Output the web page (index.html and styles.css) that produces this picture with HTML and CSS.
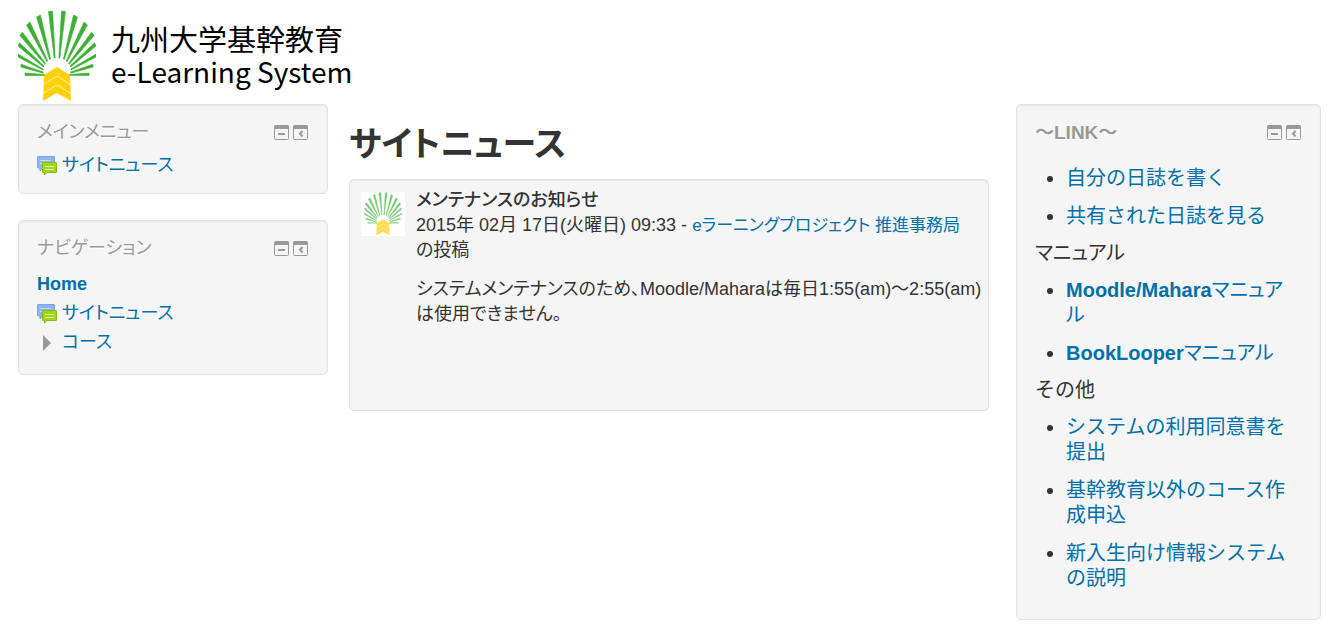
FILE: index.html
```
<!DOCTYPE html>
<html lang="ja">
<head>
<meta charset="utf-8">
<title>九州大学基幹教育 e-Learning System</title>
<link rel="stylesheet" href="styles.css">
</head>
<body>
<svg class="defs" aria-hidden="true">
  <defs>
    <g id="rays">
      <path d="M30.5 1.5 34.5 1 37.2 48H36.2Z"/>
      <path d="M18.5 7 22.5 5 32.6 49 31.6 49.5Z"/>
      <path d="M8.5 15 12 12 29.8 51 29 51.8Z"/>
      <path d="M1.8 25.5 4.5 22.2 27.5 53.5 26.7 54.3Z"/>
      <path d="M0 36 1.5 32.8 26 56 25.2 57Z"/>
      <path d="M0 47V44L25.2 59 24.8 60Z"/>
      <path d="M2.8 57 3.2 54.2 25.2 62V63.2Z"/>
      <path d="M7 65.6V63L27 64.6V65.6Z"/>
    </g>
    <symbol id="emblem" viewBox="0 0 78 92">
      <g fill="#3db034" stroke="#3db034" stroke-width=".6"><use href="#rays"/><use href="#rays" transform="matrix(-1 0 0 1 78 0)"/></g>
      <path fill="#ffd005" d="M39 57 52 65 53 91 39 83 25 91 26 65Z"/>
      <path fill="none" stroke="#fff3b8" d="M25.5 74.5 39 66 52.5 74.5M25 83.5 39 75 53 83.5"/>
    </symbol>
    <symbol id="forum" viewBox="0 0 20 20">
      <path fill="#8fb5f0" stroke="#7ba5e6" d="M1 .5H17a.5.5 0 0 1 .5.5V12H6L3 15V12H1a.5.5 0 0 1-.5-.5V1A.5.5 0 0 1 1 .5Z"/>
      <path fill="none" stroke="#c5dafa" d="M3 4.5H14M3 7.5H6"/>
      <path fill="#a2d51f" stroke="#82bd0a" d="M6 6.5H19a.5.5 0 0 1 .5.5V16a.5.5 0 0 1-.5.5H10L7.5 19V16.5H6a.5.5 0 0 1-.5-.5V7a.5.5 0 0 1 .5-.5Z"/>
      <path fill="none" stroke="#e0f5a0" d="M8 10.5H17M8 13.5H17"/>
    </symbol>
    <symbol id="hide" viewBox="0 0 15 15">
      <path fill="none" stroke="#999" d="M.5 2V13.5a1 1 0 0 0 1 1H13.500a1 1 0 0 0 1-1V2"/>
      <path fill="#999" d="M0 4V1.500A1.500 1.500 0 0 1 1.500 0H13.500A1.500 1.500 0 0 1 15 1.500V4ZM4 8H11V10H4Z"/>
    </symbol>
    <symbol id="dock" viewBox="0 0 15 15">
      <path fill="none" stroke="#999" d="M.5 2V13.5a1 1 0 0 0 1 1H13.500a1 1 0 0 0 1-1V2"/>
      <path fill="#999" d="M0 4V1.500A1.500 1.500 0 0 1 1.500 0H13.500A1.500 1.500 0 0 1 15 1.500V4Z"/>
      <path fill="none" stroke="#999" stroke-width="2" d="M9.500 6 7 8.700 9.500 11.500"/>
    </symbol>
  </defs>
</svg>

<header class="site-header">
  <a class="brand" href="#">
    <svg class="brand-mark" aria-hidden="true"><use href="#emblem"/></svg>
    <span class="brand-name"><span class="brand-ja">九州大学基幹教育</span><span class="brand-en">e-Learning System</span></span>
  </a>
</header>

<div class="page">
  <aside class="side">
    <section class="block block-menu">
      <div class="block-head">
        <h2 class="block-title">メインメニュー</h2>
        <span class="actions">
          <button aria-label="メインメニューを隠す"><svg><use href="#hide"/></svg></button>
          <button aria-label="メインメニューをドックする"><svg><use href="#dock"/></svg></button>
        </span>
      </div>
      <a class="item" href="#"><svg class="forum-icon" aria-hidden="true"><use href="#forum"/></svg>サイトニュース</a>
    </section>
    <section class="block block-nav">
      <div class="block-head">
        <h2 class="block-title">ナビゲーション</h2>
        <span class="actions">
          <button aria-label="ナビゲーションを隠す"><svg><use href="#hide"/></svg></button>
          <button aria-label="ナビゲーションをドックする"><svg><use href="#dock"/></svg></button>
        </span>
      </div>
      <nav class="tree">
        <a class="home" href="#">Home</a>
        <a class="item" href="#"><svg class="forum-icon" aria-hidden="true"><use href="#forum"/></svg>サイトニュース</a>
        <a class="item" href="#"><svg class="arrow" viewBox="0 0 20 16" aria-hidden="true"><path fill="#999" d="M6 0 14 8 6 16Z"/></svg>コース</a>
      </nav>
    </section>
  </aside>

  <main class="main">
    <h1>サイトニュース</h1>
    <article class="post">
      <span class="avatar"><svg aria-hidden="true"><use href="#emblem"/></svg></span>
      <div class="post-text">
        <h3>メンテナンスのお知らせ</h3>
        <p class="byline">2015年 02月 17日(火曜日) 09:33 - <a href="#">eラーニングプロジェクト 推進事務局</a> <span class="suffix">の投稿</span></p>
        <p>システムメンテナンスのため、Moodle/Maharaは毎日1:55(am)～2:55(am)は使用できません。</p>
      </div>
    </article>
  </main>

  <aside class="block block-links">
    <div class="block-head">
      <h2 class="block-title">～LINK～</h2>
      <span class="actions">
        <button aria-label="LINKを隠す"><svg><use href="#hide"/></svg></button>
        <button aria-label="LINKをドックする"><svg><use href="#dock"/></svg></button>
      </span>
    </div>
    <ul>
      <li><a href="#">自分の日誌を書く</a></li>
      <li><a href="#">共有された日誌を見る</a></li>
    </ul>
    <h4 class="kana">マニュアル</h4>
    <ul class="kana">
      <li><a href="#"><b>Moodle/Mahara</b>マニュアル</a></li>
      <li><a href="#"><b>BookLooper</b>マニュアル</a></li>
    </ul>
    <h4>その他</h4>
    <ul>
      <li><a href="#">システムの利用同意書を提出</a></li>
      <li><a href="#">基幹教育以外のコース作成申込</a></li>
      <li><a href="#">新入生向け情報システムの説明</a></li>
    </ul>
  </aside>
</div>
</body>
</html>
```
FILE: styles.css
```
* { box-sizing: border-box; }
body {
  margin: 0;
  padding: 10px 10px 15px 18px;
  background: #fff;
  color: #333;
  font: 18px/25px "Liberation Sans", "Noto Sans CJK JP", sans-serif;
  font-feature-settings: "palt";
}
h1, h2, h3, h4, p, ul { margin: 0; }
a { color: #0070a8; text-decoration: none; }
button { padding: 0; border: 0; background: none; cursor: pointer; }
.defs { position: absolute; width: 0; height: 0; }

.site-header { display: flex; }
.brand { display: flex; gap: 15px; height: 94px; color: #000; }
.brand-mark { width: 78px; height: 92px; }
.brand-name {
  display: flex;
  flex-direction: column;
  padding-top: 12px;
  font-family: "Noto Sans CJK JP", sans-serif;
  font-feature-settings: normal;
  white-space: nowrap;
}
.brand-ja { font-size: 29px; line-height: 32px; }
.brand-en { font-size: 28px; line-height: 34px; }

.page {
  display: grid;
  grid-template-columns: 310fr 640fr 305fr;
  column-gap: 24px;
  align-items: start;
}
.side { display: grid; gap: 26px; }
.block, .post {
  border: 1px solid #e3e3e3;
  border-radius: 5px;
  background: #f5f5f5;
  box-shadow: inset 0 1px 2px rgba(0, 0, 0, .06);
}
.block { padding: 14px 19px 14px 18px; }
.block-menu { min-height: 90px; }
.block-nav { min-height: 155px; }
.block-head { display: flex; justify-content: space-between; align-items: center; height: 26px; }
.block-title { color: #999; font-size: 18px; font-weight: 400; text-shadow: 0 1px 0 #fff; }
.block-links .block-title { font-size: 19px; font-weight: 700; }
.actions { display: flex; gap: 4px; }
.actions svg { display: block; width: 15px; height: 15px; }
.item { display: flex; align-items: center; gap: 5px; }
.block-menu .item { margin-top: 8px; }
.forum-icon { width: 20px; height: 20px; }
.arrow { width: 20px; height: 16px; }
.tree { display: grid; gap: 4px; margin-top: 11px; }
.home { font-weight: 700; }

.main { margin: 20px 3px 0 -3px; }
h1 { font-size: 34px; line-height: 40px; font-weight: 700; }
.post { display: flex; gap: 11px; min-height: 232px; margin-top: 15px; padding: 8px 4px 8px 11px; }
.avatar { flex: none; width: 44px; height: 44px; margin-top: 4px; background: #fff; }
.avatar svg { width: 44px; height: 44px; opacity: .7; }
h3 { font-size: 18px; font-weight: 500; }
.post p { margin-bottom: 14px; }
.byline a { font-size: 17px; }
.suffix { display: inline-block; }

.block-links { min-height: 516px; font-size: 20px; font-feature-settings: normal; }
.block-links ul { padding: 0 8px 0 31px; margin: 12px 0; }
.block-links ul:first-of-type { margin-top: 21px; }
.block-links li + li { margin-top: 13px; }
.block-links h4 { font-size: 20px; font-weight: 400; }
.block-links .kana { font-feature-settings: "palt"; }
```
